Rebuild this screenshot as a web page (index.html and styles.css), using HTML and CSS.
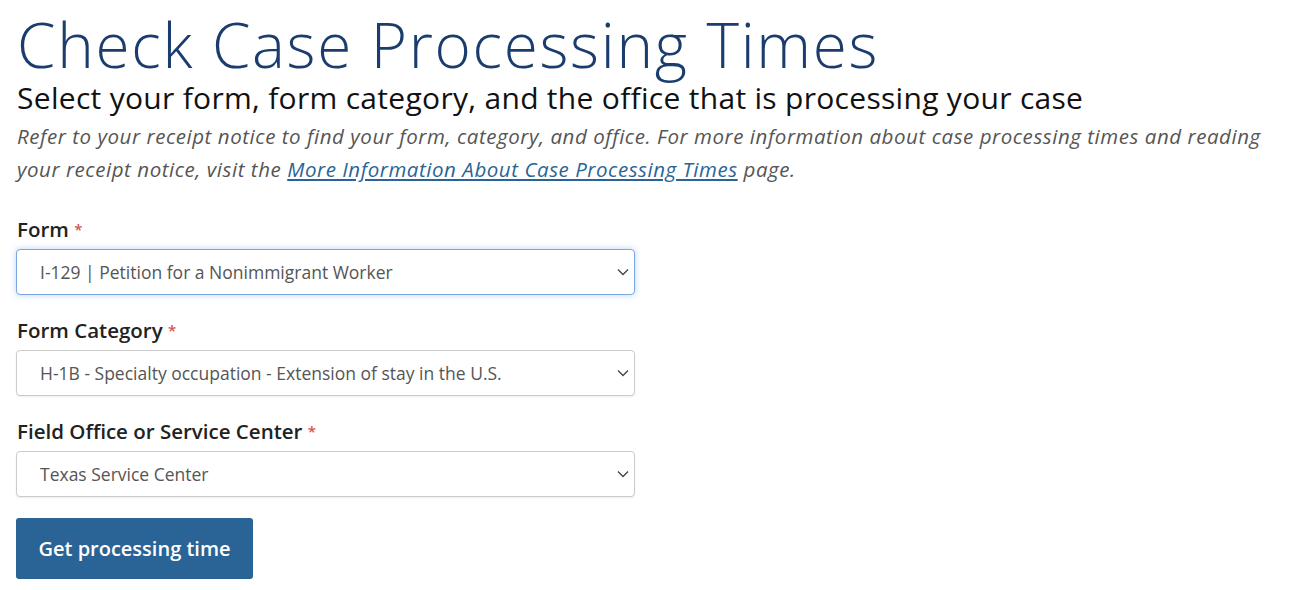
FILE: index.html
```html
<!DOCTYPE html>
<html lang="en">
<head>
    <meta charset="UTF-8">
    <meta name="viewport" content="width=device-width, initial-scale=1.0">
    <title>Check Case Processing Times</title>
    <link rel="stylesheet" href="styles.css">
</head>
<body>
    <div class="page">
        <h1>Check Case Processing Times</h1>
        <h2>Select your form, form category, and the office that is processing your case</h2>
        <p class="intro">Refer to your receipt notice to find your form, category, and office. For more information about case processing times and reading your receipt notice, visit the <a href="#">More Information About Case Processing Times</a> page.</p>

        <form class="case-form">
            <div class="field">
                <label for="form">Form <span class="req">*</span></label>
                <div class="select-wrap">
                    <select id="form" class="focused">
                        <option>I-129 | Petition for a Nonimmigrant Worker</option>
                    </select>
                    <svg class="chevron" viewBox="0 0 12 8" width="12" height="8"><path d="M1 1.5 L6 6.5 L11 1.5" fill="none" stroke="#444" stroke-width="1.3"/></svg>
                </div>
            </div>

            <div class="field">
                <label for="category">Form Category <span class="req">*</span></label>
                <div class="select-wrap">
                    <select id="category">
                        <option>H-1B - Specialty occupation - Extension of stay in the U.S.</option>
                    </select>
                    <svg class="chevron" viewBox="0 0 12 8" width="12" height="8"><path d="M1 1.5 L6 6.5 L11 1.5" fill="none" stroke="#444" stroke-width="1.3"/></svg>
                </div>
            </div>

            <div class="field">
                <label for="office">Field Office or Service Center <span class="req">*</span></label>
                <div class="select-wrap">
                    <select id="office">
                        <option>Texas Service Center</option>
                    </select>
                    <svg class="chevron" viewBox="0 0 12 8" width="12" height="8"><path d="M1 1.5 L6 6.5 L11 1.5" fill="none" stroke="#444" stroke-width="1.3"/></svg>
                </div>
            </div>

            <button type="button" class="submit-btn">Get processing time</button>
        </form>
    </div>
</body>
</html>
```

FILE: styles.css
```css
body {
    margin: 0;
    font-family: "Open Sans", Lato, sans-serif;
    background-color: #fff;
    color: #111;
}

.page {
    padding: 8px 16px 0 17px;
}

h1 {
    margin: 0;
    font-size: 62px;
    font-weight: 300;
    letter-spacing: 1.7px;
    line-height: 72px;
    color: #1b3d6e;
}

h2 {
    margin: 0;
    font-size: 30px;
    font-weight: 400;
    letter-spacing: 0.3px;
    line-height: 36px;
    color: #111;
}

.intro {
    margin: 4px 0 0;
    font-size: 20.5px;
    font-style: italic;
    letter-spacing: 0.55px;
    line-height: 33px;
    color: #555;
}

.intro a {
    color: #2a6496;
}

.case-form {
    margin-top: 31px;
    display: flex;
    flex-direction: column;
    gap: 23px;
}

.field {
    display: flex;
    flex-direction: column;
    gap: 8px;
}

label {
    font-size: 20.5px;
    font-weight: 600;
    line-height: 24px;
    color: #222;
}

.req {
    color: #d9534f;
    font-size: 15px;
    vertical-align: top;
}

.select-wrap {
    position: relative;
    width: 619px;
    margin-left: -1px;
}

select {
    appearance: none;
    -webkit-appearance: none;
    width: 100%;
    height: 46px;
    padding: 0 40px 0 23px;
    font-family: "Open Sans", Lato, sans-serif;
    font-size: 17.5px;
    color: #555;
    background-color: #fff;
    border: 1px solid #ccc;
    border-radius: 4px;
    box-shadow: 0 1px 2px rgba(0, 0, 0, 0.08);
}

select.focused {
    border-color: #7ba7de;
    box-shadow: 0 0 6px rgba(102, 160, 230, 0.45);
}

.chevron {
    position: absolute;
    right: 6px;
    top: 19px;
    pointer-events: none;
}

.submit-btn {
    align-self: flex-start;
    margin-top: -2px;
    margin-left: -1px;
    width: 237px;
    height: 61px;
    font-family: "Open Sans", Lato, sans-serif;
    font-size: 20px;
    font-weight: 600;
    color: #fff;
    background-color: #2a6496;
    border: none;
    border-radius: 3px;
    cursor: pointer;
}
```
